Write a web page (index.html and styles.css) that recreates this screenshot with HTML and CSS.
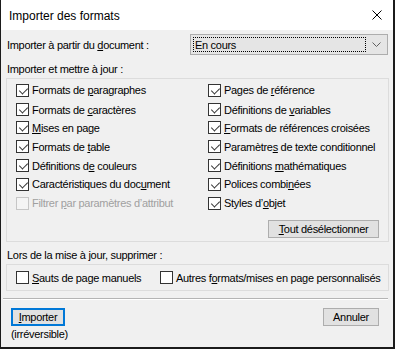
FILE: index.html
```html
<!DOCTYPE html>
<html lang="fr">
<head>
<meta charset="utf-8">
<title>Importer des formats</title>
<link rel="stylesheet" href="styles.css">
</head>
<body>
<div class="dialog">
  <div class="titlebar">
    <span class="title">Importer des formats</span>
    <svg class="close" width="10" height="10" viewBox="0 0 10 10"><path d="M0.5 0.5 L9.5 9.5 M9.5 0.5 L0.5 9.5" stroke="#000" stroke-width="1" fill="none"/></svg>
  </div>

  <div class="source-row">
    <span class="label">Importer à partir du <u>d</u>ocument :</span>
    <div class="combo">
      <span class="combo-focus">En cours</span>
      <svg class="chev" width="9" height="5" viewBox="0 0 9 5"><path d="M0.5 0.5 L4.5 4.5 L8.5 0.5" stroke="#606060" stroke-width="1" fill="none"/></svg>
    </div>
  </div>

  <div class="section-label">Importer et mettre à jour :</div>
  <div class="group group-main">
    <div class="grid">
      <label class="cb"><span class="box on"></span><span>Formats de <u>p</u>aragraphes</span></label>
      <label class="cb"><span class="box on"></span><span>Pages de <u>r</u>éférence</span></label>
      <label class="cb"><span class="box on"></span><span>Formats de <u>c</u>aractères</span></label>
      <label class="cb"><span class="box on"></span><span>Définitions de <u>v</u>ariables</span></label>
      <label class="cb"><span class="box on"></span><span><u>M</u>ises en page</span></label>
      <label class="cb"><span class="box on"></span><span><u>F</u>ormats de références croisées</span></label>
      <label class="cb"><span class="box on"></span><span>Formats de <u>t</u>able</span></label>
      <label class="cb"><span class="box on"></span><span>Paramètre<u>s</u> de texte conditionnel</span></label>
      <label class="cb"><span class="box on"></span><span>Définitions d<u>e</u> couleurs</span></label>
      <label class="cb"><span class="box on"></span><span>Définitions <u>m</u>athématiques</span></label>
      <label class="cb"><span class="box on"></span><span>Caractéristiques du doc<u>u</u>ment</span></label>
      <label class="cb"><span class="box on"></span><span>Polices combi<u>n</u>ées</span></label>
      <label class="cb disabled"><span class="box"></span><span>Filtrer <u>p</u>ar paramètres d’attribut</span></label>
      <label class="cb"><span class="box on"></span><span>Styles d’<u>o</u>bjet</span></label>
    </div>
    <div class="btn-row">
      <button class="btn btn-deselect"><u>T</u>out désélectionner</button>
    </div>
  </div>

  <div class="section-label second">Lors de la mise à jour, supprimer :</div>
  <div class="group group-delete">
    <label class="cb"><span class="box"></span><span><u>S</u>auts de page manuels</span></label>
    <label class="cb"><span class="box"></span><span>Autres f<u>o</u>rmats/mises en page personnalisés</span></label>
  </div>

  <div class="separator"></div>

  <div class="footer">
    <div class="import-col">
      <button class="btn btn-default"><u>I</u>mporter</button>
      <span class="note">(irréversible)</span>
    </div>
    <button class="btn btn-cancel">Annuler</button>
  </div>
</div>
</body>
</html>
```

FILE: styles.css
```css
html, body {
  margin: 0;
  padding: 0;
}
body {
  background: #1b1b1b;
  font-family: "Liberation Sans", Arial, sans-serif;
  font-size: 11px;
  letter-spacing: -0.3px;
  color: #000;
  width: 395px;
  height: 349px;
  overflow: hidden;
}
u {
  text-decoration: underline;
  text-underline-offset: 1px;
}
.dialog {
  margin-left: 1px;
  width: 392px;
  height: 347px;
  background: #f0f0f0;
  display: flex;
  flex-direction: column;
}
.titlebar {
  height: 30px;
  background: #fff;
  display: flex;
  align-items: center;
  padding-left: 8px;
  flex-shrink: 0;
}
.title {
  font-size: 12px;
  letter-spacing: 0;
  margin-top: 1px;
}
.close {
  margin-left: auto;
  margin-right: 11px;
}
.source-row {
  margin-top: 4px;
  height: 21px;
  display: flex;
  align-items: center;
  justify-content: space-between;
  padding: 0 5px 0 6px;
}
.combo {
  width: 198px;
  height: 21px;
  box-sizing: border-box;
  border: 1px solid #adadad;
  background: #e5e5e5;
  display: flex;
  align-items: center;
  padding: 0 6px 0 2px;
}
.combo-focus {
  flex: 1;
  height: 15px;
  line-height: 14px;
  border: 1px dotted #000;
  box-sizing: border-box;
  padding-left: 1px;
  margin-right: 6px;
}
.chev {
  flex-shrink: 0;
}
.section-label {
  margin-top: 8px;
  height: 13px;
  line-height: 13px;
  padding-left: 6px;
}
.section-label.second {
  margin-top: 7px;
}
.group {
  margin: 2px 4px 0 5px;
  border: 1px solid #dcdcdc;
}
.group-main {
  padding: 1px 0 3px 9px;
}
.grid {
  display: grid;
  grid-template-columns: 192px 1fr;
  grid-template-rows: 20px 19px 17px 21px 17px 20px 18px;
}
.cb {
  display: flex;
  align-items: center;
  gap: 3px;
  white-space: nowrap;
}
.box {
  width: 13px;
  height: 13px;
  box-sizing: border-box;
  border: 1px solid #333;
  background: #fff;
  flex-shrink: 0;
  position: relative;
}
.box.on::after {
  content: "";
  position: absolute;
  left: 2px;
  top: 0px;
  width: 7px;
  height: 4px;
  border-left: 1.3px solid #333;
  border-bottom: 1.3px solid #333;
  transform: translate(0.5px, 2.5px) rotate(-45deg);
  transform-origin: center;
}
.cb.disabled {
  color: #a0a0a0;
}
.cb.disabled .box {
  border-color: #c6c6c6;
  background: #f4f4f4;
}
.btn-row {
  display: flex;
  justify-content: flex-end;
  margin-top: 8px;
  padding-right: 9px;
}
.btn {
  font: inherit;
  letter-spacing: inherit;
  color: #000;
  background: #e1e1e1;
  border: 1px solid #adadad;
  height: 18px;
  padding: 0;
  box-sizing: border-box;
  line-height: 15px;
}
.btn-deselect {
  width: 111px;
}
.group-delete {
  margin-top: 2px;
  height: 27px;
  box-sizing: border-box;
  display: grid;
  grid-template-columns: 144px 1fr;
  align-items: center;
  padding-left: 9px;
}
.separator {
  margin: 7px 5px 0 2px;
  height: 1px;
  background: #b4b4b4;
  border-bottom: 1px solid #fff;
}
.footer {
  margin-top: 8px;
  display: flex;
  justify-content: space-between;
  align-items: flex-start;
  padding: 0 14px 0 10px;
}
.import-col {
  display: flex;
  flex-direction: column;
  align-items: flex-start;
}
.btn-default {
  width: 54px;
  border: 2px solid #0078d7;
  line-height: 14px;
}
.btn-cancel {
  width: 56px;
}
.note {
  margin-top: 2px;
  height: 13px;
  line-height: 13px;
  padding-left: 0px;
}
```
